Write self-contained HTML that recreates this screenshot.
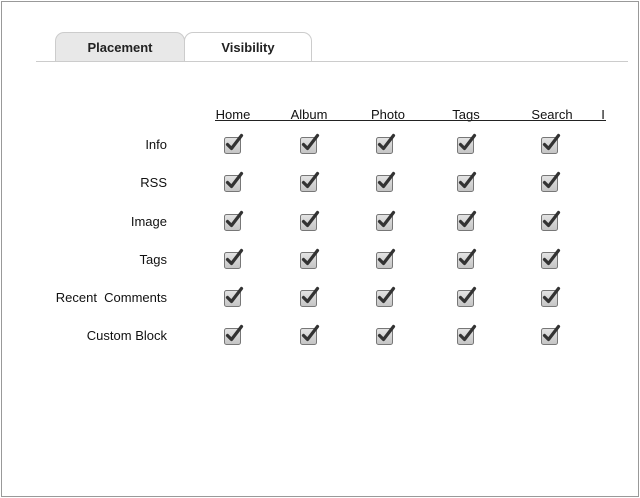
<!DOCTYPE html>
<html><head><style>
body{margin:0;width:640px;height:498px;position:relative;font-family:"Liberation Sans",sans-serif;background:#fff;overflow:hidden}
.frame{position:absolute;left:1px;top:1px;width:636px;height:494px;border:1px solid #999}
.tab{position:absolute;top:32px;height:29px;border:1px solid #ccc;border-bottom:none;border-radius:9px 9px 0 0;font-weight:bold;font-size:13px;text-align:center;line-height:29px;color:#222;box-sizing:border-box}
.line{position:absolute;left:36px;top:61px;width:592px;height:1px;background:#ccc}
.h{position:absolute;top:107px;font-size:13px;color:#111;transform:translateX(-50%)}
.ul{position:absolute;left:215px;top:120px;width:391px;height:1px;background:#222}
.l{position:absolute;right:473px;font-size:13px;color:#111;white-space:nowrap}
.cb{position:absolute;width:26px;height:24px}
</style></head><body>
<div class="frame"></div>
<div class="tab" style="left:55px;width:130px;background:#e8e8e8">Placement</div>
<div class="tab" style="left:184px;width:128px;background:#fff">Visibility</div>
<div class="line"></div>
<div class="h" style="left:233px">Home</div>
<div class="h" style="left:309px">Album</div>
<div class="h" style="left:388px">Photo</div>
<div class="h" style="left:466px">Tags</div>
<div class="h" style="left:552px">Search</div>
<div class="h" style="left:603px">I</div>
<div class="ul"></div>
<div id="rows"></div>
<script>
var labels=["Info","RSS","Image","Tags","Recent  Comments","Custom Block"];
var ys=[145,183,222,260,298,336];var xs=[233,309,385,466,550];
var svg='<svg width="26" height="24" viewBox="0 0 26 24"><defs><linearGradient id="g" x1="0" y1="0" x2="0" y2="1"><stop offset="0" stop-color="#e4e4e4"/><stop offset="1" stop-color="#c4c4c4"/></linearGradient></defs><rect x="3.5" y="6.5" width="16" height="16" rx="2" fill="url(#g)" stroke="#777"/><path d="M6.5 13.5 L10.5 17.5 L20.5 4.5" fill="none" stroke="#333" stroke-width="3.2" stroke-linecap="round" stroke-linejoin="round"/></svg>';
var h='';
for(var i=0;i<6;i++){h+='<div class="l" style="top:'+(ys[i]-8)+'px">'+labels[i].replace(/  /g,'&nbsp; ')+'</div>';
for(var j=0;j<5;j++)h+='<div class="cb" style="left:'+(xs[j]-12)+'px;top:'+(ys[i]-14)+'px">'+svg+'</div>';}
document.getElementById('rows').innerHTML=h;
</script>
</body></html>
